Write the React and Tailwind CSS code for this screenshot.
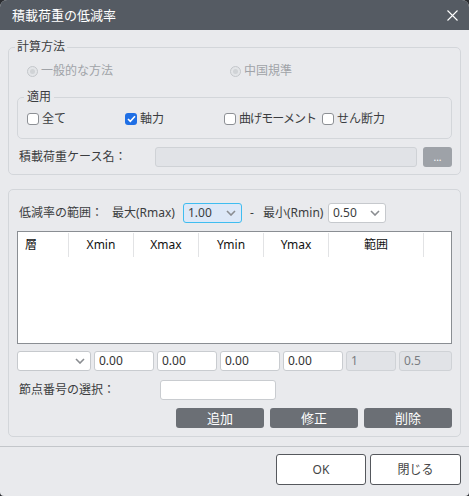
import React from 'react';

const font = "font-['Noto_Sans','Noto_Sans_CJK_JP',sans-serif]";

function Chevron() {
  return (
    <svg width="10" height="6" viewBox="0 0 10 6" className="shrink-0">
      <path d="M1 1l4 4 4-4" fill="none" stroke="#8a8d91" strokeWidth="1.6" />
    </svg>
  );
}

function Check({ checked, label, width, tight }) {
  return (
    <label className={`flex items-center gap-[3px] whitespace-nowrap ${width}`}>
      {checked ? (
        <span className="flex h-[12px] w-[12px] shrink-0 items-center justify-center rounded-[3px] bg-[#1f6fe5]">
          <svg width="9" height="8" viewBox="0 0 9 8">
            <path d="M1 4l2.3 2.3L8 1.3" fill="none" stroke="#fff" strokeWidth="1.6" />
          </svg>
        </span>
      ) : (
        <span className="h-[12px] w-[12px] shrink-0 rounded-[3px] border border-[#8d9095] bg-white" />
      )}
      <span className={tight ? 'tracking-[-0.9px]' : ''}>{label}</span>
    </label>
  );
}

function Radio({ label, width }) {
  return (
    <label className={`flex items-center gap-[3px] text-[#a0a3a8] ${width}`}>
      <span className="flex h-[11px] w-[11px] items-center justify-center rounded-full border border-[#c4c7cb] bg-[#e3e5e8]">
        <span className="h-[5px] w-[5px] rounded-full bg-[#d0d3d6]" />
      </span>
      <span>{label}</span>
    </label>
  );
}

function Field({ value, width, disabled }) {
  return (
    <div
      className={`flex h-[20px] items-center rounded-[3px] border px-[4px] ${width} ${
        disabled ? 'border-[#cfd2d6] bg-[#e1e3e7] text-[#7a7d82]' : 'border-[#c9ccd0] bg-white text-[#333]'
      }`}
    >
      {value}
    </div>
  );
}

function Select({ value, width, active }) {
  return (
    <div
      className={`flex h-[20px] items-center justify-between rounded-[3px] border pl-[4px] pr-[5px] ${width} ${
        active ? 'border-[#3fbdf0] bg-[#dde8f7]' : 'border-[#c6c9cd] bg-white'
      }`}
    >
      <span>{value}</span>
      <Chevron />
    </div>
  );
}

const columns = [
  { name: '層', w: 'w-[51px]', left: true },
  { name: 'Xmin', w: 'w-[65px]' },
  { name: 'Xmax', w: 'w-[65px]' },
  { name: 'Ymin', w: 'w-[65px]' },
  { name: 'Ymax', w: 'w-[65px]' },
  { name: '範囲', w: 'w-[95px]' },
];

export default function App() {
  return (
    <div className={`h-[496px] w-[469px] bg-[#2a2c30] text-[12px] leading-[18px] text-[#3b3d40] ${font}`}>
      <div className="flex h-full flex-col overflow-hidden rounded-t-[7px] rounded-b-[4px] bg-[#e9eaed]">
        {/* title bar */}
        <div className="flex h-[30px] shrink-0 items-center justify-between bg-[#555b63] pl-[12px] pr-[11px] text-[13px] text-white">
          <span>積載荷重の低減率</span>
          <svg width="11" height="11" viewBox="0 0 11 11">
            <path d="M0.5 0.5l10 10M10.5 0.5l-10 10" stroke="#fff" strokeWidth="1.1" />
          </svg>
        </div>

        <div className="flex flex-col px-[8px] pt-[8px]">
          {/* group 1 */}
          <fieldset className="rounded-[5px] border border-[#d3d6da] px-[8px] pb-[7px]">
            <legend className="-ml-[2px] px-[2px] text-[12px] leading-[18px]">計算方法</legend>
            <div className="mt-[6px] flex h-[18px] items-center pl-[10px]">
              <Radio label="一般的な方法" width="w-[203px]" />
              <Radio label="中国規準" />
            </div>
            <fieldset className="mt-[8px] rounded-[5px] border border-[#d3d6da] pb-[10px] pl-[9px]">
              <legend className="-ml-[3px] px-[3px] text-[12px] leading-[18px]">適用</legend>
              <div className="mt-[4px] flex h-[18px] items-center">
                <Check label="全て" width="w-[98px]" />
                <Check label="軸力" checked width="w-[99px]" />
                <Check label="曲げモーメント" width="w-[98px]" tight />
                <Check label="せん断力" />
              </div>
            </fieldset>
            <div className="mt-[8px] flex h-[20px] items-center">
              <span className="w-[138px] pl-[2px]">積載荷重ケース名：</span>
              <div className="h-[20px] w-[262px] rounded-[3px] border border-[#cfd2d6] bg-[#e1e3e7]" />
              <div className="ml-[6px] flex h-[20px] w-[29px] items-center justify-center rounded-[3px] bg-[#9ea2a8] text-[10px] text-white">
                ...
              </div>
            </div>
          </fieldset>

          {/* group 2 */}
          <div className="mt-[14px] flex flex-col rounded-[5px] border border-[#d3d6da] px-[8px] pb-[8px] pt-[13px]">
            <div className="flex h-[20px] items-center">
              <span className="w-[95px] pl-[2px]">低減率の範囲：</span>
              <span className="w-[71px]">最大(Rmax)</span>
              <Select value="1.00" width="w-[59px]" active />
              <span className="w-[21px] pl-[8px]">-</span>
              <span className="w-[65px]">最小(Rmin)</span>
              <Select value="0.50" width="w-[58px]" />
            </div>

            <div className="mt-[8px] h-[113px] w-[435px] border border-[#8a8e93] bg-white">
              <div className="flex h-[25px] items-stretch pt-[1px]">
                {columns.map((c) => (
                  <div
                    key={c.name}
                    className={`flex items-center border-r border-[#e2e3e5] text-[#111] ${c.w} ${
                      c.left ? 'pl-[7px]' : 'justify-center'
                    }`}
                  >
                    {c.name}
                  </div>
                ))}
              </div>
            </div>

            <div className="mt-[7px] flex gap-[3px]">
              <Select value="" width="w-[74px]" />
              <Field value="0.00" width="w-[60px]" />
              <Field value="0.00" width="w-[60px]" />
              <Field value="0.00" width="w-[60px]" />
              <Field value="0.00" width="w-[60px]" />
              <Field value="1" width="w-[50px]" disabled />
              <Field value="0.5" width="w-[53px]" disabled />
            </div>

            <div className="mt-[9px] flex h-[20px] items-center">
              <span className="w-[143px] pl-[2px]">節点番号の選択：</span>
              <div className="h-[20px] w-[116px] rounded-[3px] border border-[#c9ccd0] bg-white" />
            </div>

            <div className="mt-[8px] flex justify-end gap-[6px]">
              {['追加', '修正', '削除'].map((t) => (
                <div
                  key={t}
                  className="flex h-[20px] w-[88px] items-center justify-center rounded-[3px] bg-[#6b6f75] text-[13px] text-white"
                >
                  {t}
                </div>
              ))}
            </div>
          </div>
        </div>

        <div className="mt-[9px] h-px bg-[#c3c6ca]" />

        <div className="mt-[7px] flex justify-end gap-[4px] pr-[8px]">
          <div className="flex h-[31px] w-[90px] items-center justify-center rounded-[3px] border border-[#55585d] bg-white text-[#444]">
            OK
          </div>
          <div className="flex h-[31px] w-[91px] items-center justify-center rounded-[3px] border border-[#55585d] bg-white text-[#444]">
            閉じる
          </div>
        </div>
      </div>
    </div>
  );
}
